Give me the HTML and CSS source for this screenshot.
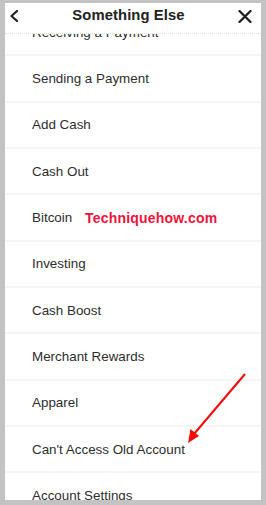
FILE: index.html
```html
<!DOCTYPE html>
<html>
<head>
<meta charset="utf-8">
<link rel="stylesheet" href="styles.css">
</head>
<body>
<div class="frame">
  <header class="topbar">
    <svg class="back" width="10" height="12" viewBox="0 0 10 12"><path d="M8 1 L2.5 6 L8 11" fill="none" stroke="#1f1f1f" stroke-width="2.2" stroke-linecap="round" stroke-linejoin="round"/></svg>
    <h1 class="title">Something Else</h1>
    <svg class="close" width="14" height="13" viewBox="0 0 14 13"><path d="M1.5 1 L12.5 12 M12.5 1 L1.5 12" fill="none" stroke="#1f1f1f" stroke-width="2.3" stroke-linecap="round"/></svg>
  </header>
  <div class="scroller">
    <ul class="list">
      <li class="row">Receiving a Payment</li>
      <li class="row">Sending a Payment</li>
      <li class="row">Add Cash</li>
      <li class="row">Cash Out</li>
      <li class="row">Bitcoin</li>
      <li class="row">Investing</li>
      <li class="row">Cash Boost</li>
      <li class="row">Merchant Rewards</li>
      <li class="row">Apparel</li>
      <li class="row">Can't Access Old Account</li>
      <li class="row">Account Settings</li>
    </ul>
  </div>
  <div class="watermark">Techniquehow.com</div>
  <svg class="arrow" width="70" height="80" viewBox="0 0 70 80">
    <line x1="63" y1="2" x2="12" y2="62" stroke="#f20a0a" stroke-width="2"/>
    <path d="M6 71 L8.5 57 L17 64 Z" fill="#f20a0a"/>
  </svg>
</div>
</body>
</html>
```
FILE: styles.css
```css
html, body {
  margin: 0;
  padding: 0;
}
body {
  background: #c3c3c3;
  width: 266px;
  height: 505px;
  overflow: hidden;
  font-family: "Liberation Sans", Arial, sans-serif;
}
.frame {
  position: relative;
  margin: 3px 5px 0 5px;
  width: 256px;
  height: 497px;
  background: #fff;
  overflow: hidden;
  display: flex;
  flex-direction: column;
}
.topbar {
  flex: 0 0 auto;
  height: 30px;
  display: flex;
  align-items: center;
  justify-content: space-between;
  padding: 0 9px 0 4px;
  border-bottom: 1px dotted #e0e0e0;
  box-sizing: content-box;
}
.back {
  margin-top: -4px;
}
.close {
  margin-top: -4px;
}
.title {
  margin: -7px 0 0 0;
  font-size: 14.8px;
  font-weight: bold;
  color: #222;
  letter-spacing: 0.1px;
}
.scroller {
  flex: 1 1 auto;
  overflow: hidden;
}
.list {
  list-style: none;
  margin: -24px 0 0 0;
  padding: 0;
}
.row {
  box-sizing: border-box;
  height: 46.33px;
  display: flex;
  align-items: center;
  padding-left: 27px;
  font-size: 13.4px;
  color: #2e2e2e;
  border-bottom: 2px solid #f5f5f5;
}
.watermark {
  position: absolute;
  left: 80px;
  top: 207px;
  font-size: 14px;
  font-weight: bold;
  color: #f0123a;
  letter-spacing: 0.2px;
}
.arrow {
  position: absolute;
  left: 177px;
  top: 369px;
}
```
